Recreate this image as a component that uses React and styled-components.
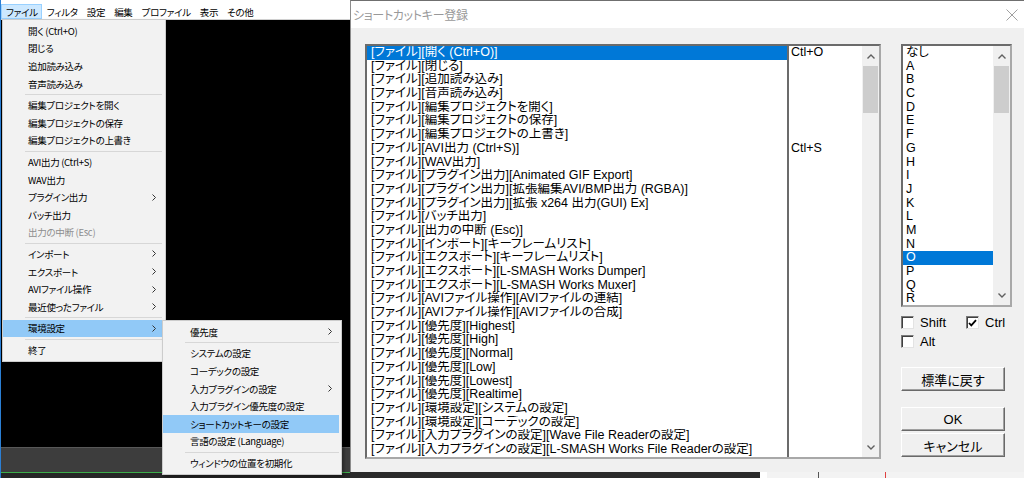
import React from 'react';
import styled, { createGlobalStyle } from 'styled-components';

const GlobalStyle = createGlobalStyle`
  html, body {
    margin: 0;
    padding: 0;
  }
  body {
    width: 1024px;
    height: 478px;
    overflow: hidden;
    background: #262626;
    font-family: "Noto Sans CJK JP", sans-serif;
  }
  * {
    box-sizing: border-box;
  }
`;

const Screen = styled.div`
  display: flex;
  width: 1024px;
  height: 478px;
  overflow: hidden;
`;

/* ---------- main window (left) ---------- */

const AppWindow = styled.div`
  position: relative;
  width: 350px;
  height: 100%;
  flex-shrink: 0;
  display: flex;
  flex-direction: column;
  border-left: 1px solid #2b7fd4;
`;

const MenuBar = styled.div`
  height: 20px;
  display: flex;
  align-items: flex-end;
  background: #fff;
  border-bottom: 1px solid #d0d0d0;
  font-size: 9.5px;
  letter-spacing: -0.3px;
  font-feature-settings: "palt" 1;
  color: #000;
`;

const MenuBarItem = styled.div`
  height: 15px;
  padding: 1px 3px 0 4px;
  display: flex;
  align-items: center;
  white-space: nowrap;
  border: 1px solid ${props => props.$open ? '#99d1ff' : 'transparent'};
  background: ${props => props.$open ? '#cce8ff' : 'transparent'};
`;

const ClientArea = styled.div`
  flex: 1;
  background: #000;
`;

const StatusBar = styled.div`
  height: 26px;
  background: #3d3d3d;
  border-top: 1px solid #585858;
  border-bottom: 1px solid #3cae4a;
`;

const Footer = styled.div`
  height: 5px;
  background: #262626;
`;

const MenuPanel = styled.div`
  position: absolute;
  display: flex;
  flex-direction: column;
  background: #f2f2f2;
  border: 1px solid #cccccc;
  box-shadow: 2px 2px 3px rgba(0, 0, 0, 0.35);
  font-size: 9.5px;
  letter-spacing: -0.3px;
  font-feature-settings: "palt" 1;
  color: #000;
`;

const FileMenu = styled(MenuPanel)`
  left: 1px;
  top: 19px;
  width: 164px;
  padding: 2px 3px 2px 0;
  z-index: 2;
`;

const SettingsMenu = styled(MenuPanel)`
  left: 161px;
  top: 320px;
  width: 180px;
  padding: 2px 2px 2px 0;
  z-index: 3;
`;

const MenuRow = styled.div`
  height: 17.6px;
  flex-shrink: 0;
  display: flex;
  align-items: center;
  justify-content: space-between;
  padding: 0 ${props => props.$arrowPad}px 0 ${props => props.$indent}px;
  white-space: nowrap;
  background: ${props => props.$active ? '#91c9f7' : 'transparent'};
  color: ${props => props.$disabled ? '#8d8d8d' : '#000'};
`;

const MenuSeparator = styled.div`
  height: 4px;
  flex-shrink: 0;
  margin-left: 22px;
  display: flex;
  align-items: center;

  &::after {
    content: '';
    flex: 1;
    height: 1px;
    background: #d7d7d7;
  }
`;

/* ---------- shortcut dialog (right) ---------- */

const DialogColumn = styled.div`
  flex: 1;
  display: flex;
  flex-direction: column;
`;

const Dialog = styled.div`
  height: 472px;
  display: flex;
  flex-direction: column;
  background: #f0f0f0;
  border-top: 1px solid #6f6f6f;
  border-left: 1px solid #8c8c8c;
`;

const TitleBar = styled.div`
  height: 27px;
  display: flex;
  align-items: center;
  justify-content: space-between;
  padding: 0 6px 0 2px;
  background: #fff;
`;

const Title = styled.span`
  font-size: 12px;
  letter-spacing: -0.3px;
  color: #999;
  font-feature-settings: "palt" 1;
`;

const DialogBody = styled.div`
  flex: 1;
  display: flex;
  align-items: flex-start;
  gap: 20px;
  padding: 16px 0 0 14px;
`;

const SunkenFrame = styled.div`
  display: flex;
  width: ${props => props.$w}px;
  height: ${props => props.$h}px;
  background: #fff;
  border: 2px solid;
  border-color: #6b6b6b #a8a8a8 #a8a8a8 #6b6b6b;
  overflow: hidden;
`;

const ListColumn = styled.div`
  width: ${props => props.$w}px;
  flex-shrink: 0;
  display: flex;
  flex-direction: column;
  overflow: hidden;
  border-left: ${props => props.$divider ? '2px solid #6b6b6b' : 'none'};
`;

const ListRow = styled.div`
  height: 13.7px;
  line-height: 13.7px;
  flex-shrink: 0;
  overflow: hidden;
  padding-left: ${props => props.$pad}px;
  white-space: nowrap;
  font-family: "Liberation Sans", "Noto Sans CJK JP", sans-serif;
  font-size: 12.5px;
  font-feature-settings: "palt" 1;
  color: ${props => props.$selected ? '#fff' : '#000'};
  background: ${props => props.$selected ? '#0078d7' : 'transparent'};
`;

const ScrollBar = styled.div`
  width: 17px;
  flex-shrink: 0;
  display: flex;
  flex-direction: column;
  background: #f0f0f0;
`;

const ScrollArrow = styled.div`
  height: 20px;
  display: flex;
  align-items: center;
  justify-content: center;
`;

const ScrollTrack = styled.div`
  flex: 1;
  padding: 0 1px;
`;

const ScrollThumb = styled.div`
  height: 47px;
  background: #cdcdcd;
`;

const SidePanel = styled.div`
  width: 111px;
  display: flex;
  flex-direction: column;
`;

const CheckRow = styled.div`
  height: 13px;
  display: flex;
  align-items: center;
  margin-top: ${props => props.$gap}px;
`;

const CheckItem = styled.div`
  display: flex;
  align-items: center;
  gap: 6px;
  width: ${props => props.$w ? `${props.$w}px` : 'auto'};
  font-family: "Liberation Sans", sans-serif;
  font-size: 13px;
  color: #000;
`;

const CheckBox = styled.span`
  width: 13px;
  height: 13px;
  display: flex;
  align-items: center;
  justify-content: center;
  background: #fff;
  border: 1px solid;
  border-color: #7a7a7a #e3e3e3 #e3e3e3 #7a7a7a;
  box-shadow: inset 1px 1px 0 #404040;
`;

const PushButton = styled.button`
  width: 104px;
  height: 24px;
  margin-top: ${props => props.$gap}px;
  padding: 0;
  background: #f0f0f0;
  border: 1px solid;
  border-color: #fff #696969 #696969 #fff;
  box-shadow: inset -1px -1px 0 #a0a0a0;
  font-family: "Liberation Sans", "Noto Sans CJK JP", sans-serif;
  font-size: 13px;
  font-feature-settings: "palt" 1;
  color: #000;
`;

const TaskStrip = styled.div`
  flex: 1;
  display: flex;
`;

const DarkSegment = styled.div`
  width: 410px;
  background: #2b2b2b;
`;

const LightSegment = styled.div`
  flex: 1;
  display: flex;
  background: #f3f3f3;
  border-left: 7px solid #fff;
`;

const StripMark = styled.div`
  width: 1px;
  margin-left: ${props => props.$x}px;
  background: ${props => props.$color};
`;

/* ---------- data ---------- */

const menuBarItems = ['ファイル', 'フィルタ', '設定', '編集', 'プロファイル', '表示', 'その他'];

const SEP = { sep: true };

const fileMenu = [
  { label: '開く (Ctrl+O)' },
  { label: '閉じる' },
  { label: '追加読み込み' },
  { label: '音声読み込み' },
  SEP,
  { label: '編集プロジェクトを開く' },
  { label: '編集プロジェクトの保存' },
  { label: '編集プロジェクトの上書き' },
  SEP,
  { label: 'AVI出力 (Ctrl+S)' },
  { label: 'WAV出力' },
  { label: 'プラグイン出力', sub: true },
  { label: 'バッチ出力' },
  { label: '出力の中断 (Esc)', disabled: true },
  SEP,
  { label: 'インポート', sub: true },
  { label: 'エクスポート', sub: true },
  { label: 'AVIファイル操作', sub: true },
  { label: '最近使ったファイル', sub: true },
  SEP,
  { label: '環境設定', sub: true, active: true },
  SEP,
  { label: '終了' },
];

const settingsMenu = [
  { label: '優先度', sub: true },
  SEP,
  { label: 'システムの設定' },
  { label: 'コーデックの設定' },
  { label: '入力プラグインの設定', sub: true },
  { label: '入力プラグイン優先度の設定' },
  { label: 'ショートカットキーの設定', active: true },
  { label: '言語の設定 (Language)' },
  SEP,
  { label: 'ウィンドウの位置を初期化' },
];

const commands = [
  ['[ファイル][開く (Ctrl+O)]', 'Ctl+O'],
  ['[ファイル][閉じる]'],
  ['[ファイル][追加読み込み]'],
  ['[ファイル][音声読み込み]'],
  ['[ファイル][編集プロジェクトを開く]'],
  ['[ファイル][編集プロジェクトの保存]'],
  ['[ファイル][編集プロジェクトの上書き]'],
  ['[ファイル][AVI出力 (Ctrl+S)]', 'Ctl+S'],
  ['[ファイル][WAV出力]'],
  ['[ファイル][プラグイン出力][Animated GIF Export]'],
  ['[ファイル][プラグイン出力][拡張編集AVI/BMP出力 (RGBA)]'],
  ['[ファイル][プラグイン出力][拡張 x264 出力(GUI) Ex]'],
  ['[ファイル][バッチ出力]'],
  ['[ファイル][出力の中断 (Esc)]'],
  ['[ファイル][インポート][キーフレームリスト]'],
  ['[ファイル][エクスポート][キーフレームリスト]'],
  ['[ファイル][エクスポート][L-SMASH Works Dumper]'],
  ['[ファイル][エクスポート][L-SMASH Works Muxer]'],
  ['[ファイル][AVIファイル操作][AVIファイルの連結]'],
  ['[ファイル][AVIファイル操作][AVIファイルの合成]'],
  ['[ファイル][優先度][Highest]'],
  ['[ファイル][優先度][High]'],
  ['[ファイル][優先度][Normal]'],
  ['[ファイル][優先度][Low]'],
  ['[ファイル][優先度][Lowest]'],
  ['[ファイル][優先度][Realtime]'],
  ['[ファイル][環境設定][システムの設定]'],
  ['[ファイル][環境設定][コーデックの設定]'],
  ['[ファイル][入力プラグインの設定][Wave File Readerの設定]'],
  ['[ファイル][入力プラグインの設定][L-SMASH Works File Readerの設定]'],
];

const keys = ['なし', 'A', 'B', 'C', 'D', 'E', 'F', 'G', 'H', 'I', 'J', 'K', 'L', 'M', 'N', 'O', 'P', 'Q', 'R'];

/* ---------- small drawings ---------- */

const SubArrow = () => (
  <svg width="4" height="7" viewBox="0 0 4 7">
    <polyline points="0.5,0.5 3.5,3.5 0.5,6.5" fill="none" stroke="#333" strokeWidth="1" />
  </svg>
);

const Chevron = ({ down }) => (
  <svg width="8" height="5" viewBox="0 0 8 5">
    <polyline
      points={down ? '0.5,0.5 4,4 7.5,0.5' : '0.5,4.5 4,1 7.5,4.5'}
      fill="none"
      stroke="#606060"
      strokeWidth="1.4"
    />
  </svg>
);

const CloseIcon = () => (
  <svg width="12" height="12" viewBox="0 0 12 12">
    <path d="M0.5 0.5 L11.5 11.5 M11.5 0.5 L0.5 11.5" stroke="#a0a0a0" strokeWidth="1" />
  </svg>
);

const Tick = () => (
  <svg width="9" height="8" viewBox="0 0 9 8">
    <polyline points="1,4 3.3,6.4 8,1.2" fill="none" stroke="#000" strokeWidth="1.8" />
  </svg>
);

/* ---------- pieces ---------- */

function Menu({ as: Panel, items, indent, arrowPad }) {
  return (
    <Panel>
      {items.map((item, i) =>
        item.sep ? (
          <MenuSeparator key={i} />
        ) : (
          <MenuRow
            key={i}
            $indent={indent}
            $arrowPad={arrowPad}
            $active={item.active}
            $disabled={item.disabled}
          >
            <span>{item.label}</span>
            {item.sub && <SubArrow />}
          </MenuRow>
        )
      )}
    </Panel>
  );
}

function ScrollBarV() {
  return (
    <ScrollBar>
      <ScrollArrow><Chevron /></ScrollArrow>
      <ScrollTrack><ScrollThumb /></ScrollTrack>
      <ScrollArrow><Chevron down /></ScrollArrow>
    </ScrollBar>
  );
}

function Check({ label, checked, width }) {
  return (
    <CheckItem $w={width}>
      <CheckBox>{checked && <Tick />}</CheckBox>
      {label}
    </CheckItem>
  );
}

export default function App() {
  return (
    <>
      <GlobalStyle />
      <Screen>
        <AppWindow>
          <MenuBar>
            {menuBarItems.map((name, i) => (
              <MenuBarItem key={name} $open={i === 0}>{name}</MenuBarItem>
            ))}
          </MenuBar>
          <ClientArea />
          <StatusBar />
          <Footer />
          <Menu as={FileMenu} items={fileMenu} indent={25} arrowPad={6} />
          <Menu as={SettingsMenu} items={settingsMenu} indent={27} arrowPad={7} />
        </AppWindow>

        <DialogColumn>
          <Dialog>
            <TitleBar>
              <Title>ショートカットキー登録</Title>
              <CloseIcon />
            </TitleBar>
            <DialogBody>
              <SunkenFrame $w={516} $h={415}>
                <ListColumn $w={420}>
                  {commands.map(([name], i) => (
                    <ListRow key={i} $pad={4} $selected={i === 0}>{name}</ListRow>
                  ))}
                </ListColumn>
                <ListColumn $w={75} $divider>
                  {commands.map(([, key], i) => (
                    <ListRow key={i} $pad={2}>{key || ''}</ListRow>
                  ))}
                </ListColumn>
                <ScrollBarV />
              </SunkenFrame>

              <SidePanel>
                <SunkenFrame $w={111} $h={263}>
                  <ListColumn $w={90}>
                    {keys.map(k => (
                      <ListRow key={k} $pad={3} $selected={k === 'O'}>{k}</ListRow>
                    ))}
                  </ListColumn>
                  <ScrollBarV />
                </SunkenFrame>
                <CheckRow $gap={9}>
                  <Check label="Shift" width={65} />
                  <Check label="Ctrl" checked />
                </CheckRow>
                <CheckRow $gap={6}>
                  <Check label="Alt" />
                </CheckRow>
                <PushButton $gap={19}>標準に戻す</PushButton>
                <PushButton $gap={16}>OK</PushButton>
                <PushButton $gap={2}>キャンセル</PushButton>
              </SidePanel>
            </DialogBody>
          </Dialog>
          <TaskStrip>
            <DarkSegment />
            <LightSegment>
              <StripMark $x={51} $color="#555" />
              <StripMark $x={66} $color="#e04040" />
            </LightSegment>
          </TaskStrip>
        </DialogColumn>
      </Screen>
    </>
  );
}
